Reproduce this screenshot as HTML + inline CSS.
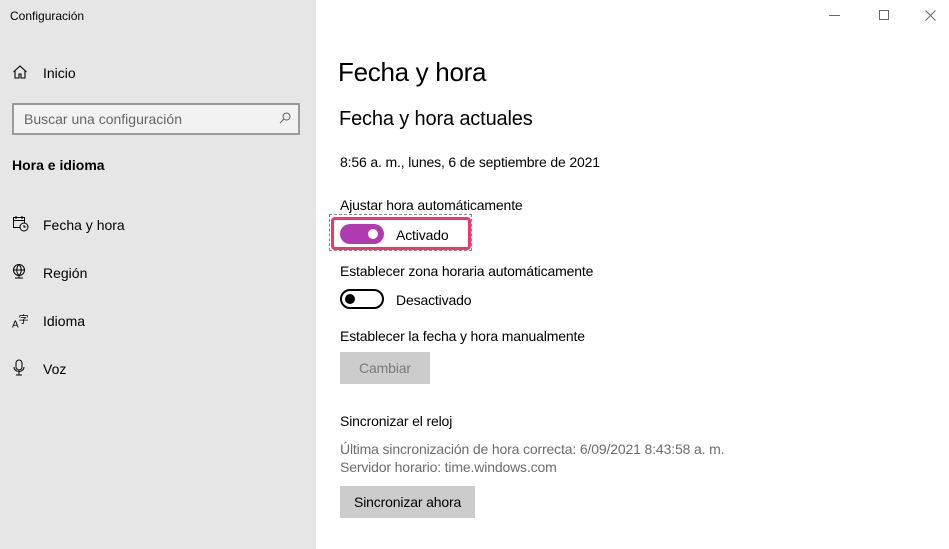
<!DOCTYPE html>
<html><head><meta charset="utf-8"><style>
*{margin:0;padding:0;box-sizing:border-box}
body{width:949px;height:549px;overflow:hidden;font-family:"Liberation Sans",sans-serif;background:#fff;position:relative;color:#000}
.side{position:absolute;left:0;top:0;width:316px;height:549px;background:#e6e6e6}
.t{position:absolute;white-space:nowrap}
.nav{font-size:14px;left:43px}
.ic{position:absolute;left:12px}
.g{color:#6d6d6d}
.m{letter-spacing:-0.15px}
</style></head><body>
<div class="side">
<div class="t" style="left:10px;top:9px;font-size:12px">Configuración</div>
<svg class="ic" style="top:64px" width="16" height="16" viewBox="0 0 16 16" fill="none" stroke="#000" stroke-width="1.1"><path d="M1.5 8L8 2l6.5 6M3 7v7h4v-4h2v4h4V7"/></svg>
<div class="t nav" style="top:65px">Inicio</div>
<div style="position:absolute;left:12px;top:103px;width:288px;height:32px;border:2px solid #999;background:#f2f2f2"></div>
<div class="t" style="left:24px;top:111px;font-size:14px;color:#666">Buscar una configuración</div>
<svg style="position:absolute;left:279px;top:112px" width="12" height="12" viewBox="0 0 12 12" fill="none" stroke="#666"><circle cx="7.5" cy="4.5" r="3.5"/><path d="M5 7L1 11"/></svg>
<div class="t" style="left:12px;top:157px;font-size:14px;font-weight:bold">Hora e idioma</div>
<svg class="ic" style="top:215px" width="17" height="17" viewBox="0 0 17 17" fill="none" stroke="#000"><rect x="1.5" y="2.5" width="11" height="10"/><path d="M1.5 5.5h11M4 1v3M10 1v3"/><circle cx="12" cy="12" r="4" fill="#e6e6e6"/><path d="M12 10v2h2"/></svg>
<div class="t nav" style="top:217px">Fecha y hora</div>
<svg class="ic" style="top:263px" width="16" height="17" viewBox="0 0 16 17" fill="none" stroke="#000"><circle cx="7" cy="7" r="5.5"/><path d="M1.5 7h11M7 1.5c-3 3-3 8 0 11M7 1.5c3 3 3 8 0 11M3 15h8M7 12.5v2.5"/></svg>
<div class="t nav" style="top:265px">Región</div>
<div class="t" style="left:12px;top:311px;font-size:10px">A<sup style="font-size:10px">字</sup></div>
<div class="t nav" style="top:313px">Idioma</div>
<svg class="ic" style="top:359px" width="14" height="17" viewBox="0 0 14 17" fill="none" stroke="#000"><rect x="4" y="1" width="6" height="10" rx="3"/><path d="M2 8c0 6 10 6 10 0M7 13v3M4 16h6"/></svg>
<div class="t nav" style="top:361px">Voz</div>
</div>
<div style="position:absolute;left:829px;top:15px;width:11px;height:1px;background:#666"></div>
<div style="position:absolute;left:879px;top:10px;width:10px;height:10px;border:1px solid #666"></div>
<svg style="position:absolute;left:925px;top:10px" width="11" height="11" viewBox="0 0 11 11" stroke="#666"><path d="M0.5 0.5l10 10M10.5 0.5l-10 10"/></svg>
<div class="t" style="left:338px;top:57px;font-size:26px;letter-spacing:-0.3px">Fecha y hora</div>
<div class="t m" style="left:339px;top:108px;font-size:20px">Fecha y hora actuales</div>
<div class="t m" style="left:340px;top:154px;font-size:14px">8:56 a. m., lunes, 6 de septiembre de 2021</div>
<div class="t m" style="left:340px;top:197px;font-size:14px">Ajustar hora automáticamente</div>
<div style="position:absolute;left:329px;top:214px;width:143px;height:37px;border:1px dashed #888"></div>
<div style="position:absolute;left:331px;top:217px;width:140px;height:33px;border:3px solid #f0366c;border-radius:4px"></div>
<div style="position:absolute;left:340px;top:224px;width:44px;height:20px;border-radius:10px;background:#b03ab0"></div>
<div style="position:absolute;left:368px;top:229px;width:10px;height:10px;border-radius:5px;background:#fff"></div>
<div class="t m" style="left:396px;top:227px;font-size:14px">Activado</div>
<div class="t m" style="left:340px;top:263px;font-size:14px">Establecer zona horaria automáticamente</div>
<div style="position:absolute;left:340px;top:289px;width:44px;height:20px;border-radius:10px;border:2px solid #000"></div>
<div style="position:absolute;left:345px;top:294px;width:10px;height:10px;border-radius:5px;background:#000"></div>
<div class="t m" style="left:396px;top:292px;font-size:14px">Desactivado</div>
<div class="t m" style="left:340px;top:328px;font-size:14px">Establecer la fecha y hora manualmente</div>
<div style="position:absolute;left:340px;top:352px;width:90px;height:32px;background:#ccc"></div>
<div class="t m" style="left:359px;top:360px;font-size:14px;color:#7a7a7a">Cambiar</div>
<div class="t m" style="left:340px;top:413px;font-size:14px">Sincronizar el reloj</div>
<div class="t g m" style="left:340px;top:441px;font-size:14px">Última sincronización de hora correcta: 6/09/2021 8:43:58 a. m.</div>
<div class="t g m" style="left:340px;top:459px;font-size:14px">Servidor horario: time.windows.com</div>
<div style="position:absolute;left:340px;top:486px;width:135px;height:32px;background:#ccc"></div>
<div class="t m" style="left:354px;top:494px;font-size:14px">Sincronizar ahora</div>
</body></html>
